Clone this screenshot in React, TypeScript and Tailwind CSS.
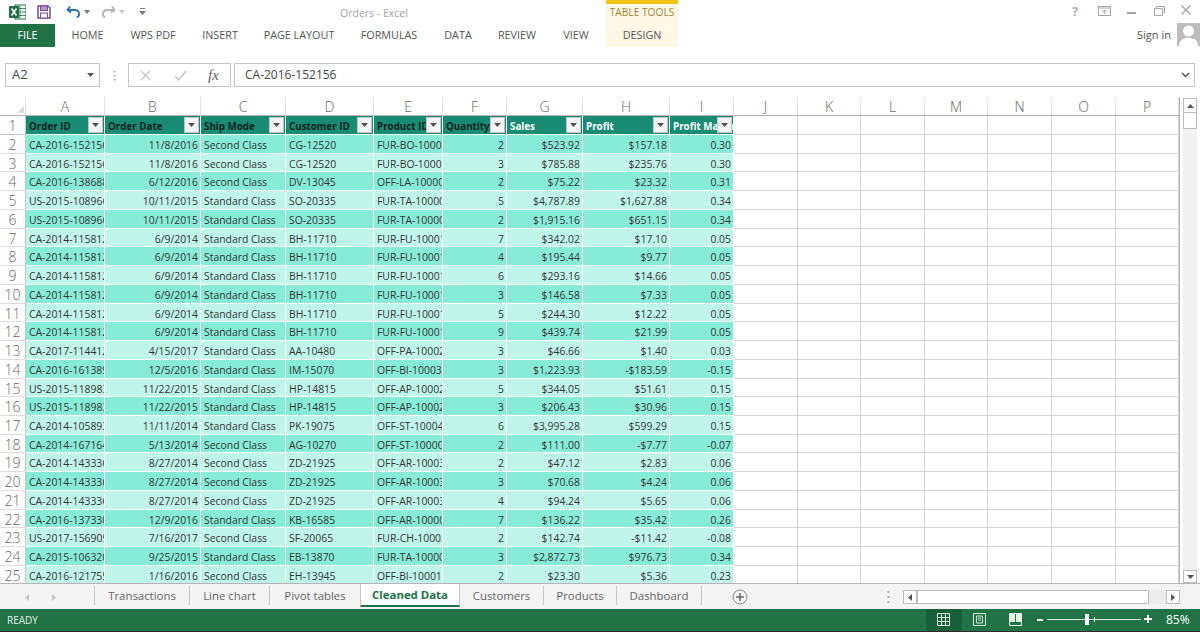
import React from "react";

const COLS = [79, 96, 85, 88, 69, 64, 76, 87, 64];
const EMPTY = [64, 63, 64, 63, 64, 64, 63];
const LETTERS = "ABCDEFGHIJKLMNOP".split("");
const HEAD = ["Order ID", "Order Date", "Ship Mode", "Customer ID", "Product ID", "Quantity", "Sales", "Profit", "Profit Margin"];

const c15 = ["CA-2014-115812", "6/9/2014", "Standard Class", "BH-11710", "FUR-FU-10001487"];
const c19 = ["CA-2014-143336", "8/27/2014", "Second Class", "ZD-21925", "OFF-AR-10003056"];
const ROWS: string[][] = [
  ["CA-2016-152156", "11/8/2016", "Second Class", "CG-12520", "FUR-BO-10001798", "2", "$523.92", "$157.18", "0.30"],
  ["CA-2016-152156", "11/8/2016", "Second Class", "CG-12520", "FUR-BO-10001798", "3", "$785.88", "$235.76", "0.30"],
  ["CA-2016-138688", "6/12/2016", "Second Class", "DV-13045", "OFF-LA-10000240", "2", "$75.22", "$23.32", "0.31"],
  ["US-2015-108966", "10/11/2015", "Standard Class", "SO-20335", "FUR-TA-10000577", "5", "$4,787.89", "$1,627.88", "0.34"],
  ["US-2015-108966", "10/11/2015", "Standard Class", "SO-20335", "FUR-TA-10000577", "2", "$1,915.16", "$651.15", "0.34"],
  [...c15, "7", "$342.02", "$17.10", "0.05"],
  [...c15, "4", "$195.44", "$9.77", "0.05"],
  [...c15, "6", "$293.16", "$14.66", "0.05"],
  [...c15, "3", "$146.58", "$7.33", "0.05"],
  [...c15, "5", "$244.30", "$12.22", "0.05"],
  [...c15, "9", "$439.74", "$21.99", "0.05"],
  ["CA-2017-114412", "4/15/2017", "Standard Class", "AA-10480", "OFF-PA-10002365", "3", "$46.66", "$1.40", "0.03"],
  ["CA-2016-161389", "12/5/2016", "Standard Class", "IM-15070", "OFF-BI-10003656", "3", "$1,223.93", "-$183.59", "-0.15"],
  ["US-2015-118983", "11/22/2015", "Standard Class", "HP-14815", "OFF-AP-10002892", "5", "$344.05", "$51.61", "0.15"],
  ["US-2015-118983", "11/22/2015", "Standard Class", "HP-14815", "OFF-AP-10002892", "3", "$206.43", "$30.96", "0.15"],
  ["CA-2014-105893", "11/11/2014", "Standard Class", "PK-19075", "OFF-ST-10004186", "6", "$3,995.28", "$599.29", "0.15"],
  ["CA-2014-167164", "5/13/2014", "Second Class", "AG-10270", "OFF-ST-10000107", "2", "$111.00", "-$7.77", "-0.07"],
  [...c19, "2", "$47.12", "$2.83", "0.06"],
  [...c19, "3", "$70.68", "$4.24", "0.06"],
  [...c19, "4", "$94.24", "$5.65", "0.06"],
  ["CA-2016-137330", "12/9/2016", "Standard Class", "KB-16585", "OFF-AR-10000246", "7", "$136.22", "$35.42", "0.26"],
  ["US-2017-156909", "7/16/2017", "Second Class", "SF-20065", "FUR-CH-10002774", "2", "$142.74", "-$11.42", "-0.08"],
  ["CA-2015-106320", "9/25/2015", "Standard Class", "EB-13870", "FUR-TA-10000577", "3", "$2,872.73", "$976.73", "0.34"],
  ["CA-2016-121755", "1/16/2016", "Second Class", "EH-13945", "OFF-BI-10001634", "2", "$23.30", "$5.36", "0.23"],
];
const RIGHT = [1, 5, 6, 7, 8];

const TABS = [
  ["HOME", "w-[65px]"],
  ["WPS PDF", "w-[66px]"],
  ["INSERT", "w-[68px]"],
  ["PAGE LAYOUT", "w-[90px]"],
  ["FORMULAS", "w-[90px]"],
  ["DATA", "w-[48px]"],
  ["REVIEW", "w-[70px]"],
  ["VIEW", "w-[48px]"],
];

function Arrow() {
  return <svg width="7" height="4" viewBox="0 0 7 4"><path d="M0 0h7L3.500 4z" fill="#555" /></svg>;
}

function FilterBtn() {
  return (
    <span className="absolute right-[1px] top-[1px] w-[15px] h-[16px] bg-[#f4f4f4] border border-[#c4c4c4] flex items-center justify-center">
      <Arrow />
    </span>
  );
}

function Sep() {
  return <span className="w-px h-[19px] bg-[#c6c6c6]" />;
}

export default function App() {
  return (
    <div className="w-[1200px] h-[632px] overflow-hidden bg-white flex flex-col text-[#444] font-['Open_Sans','Noto_Sans',sans-serif]">
      {/* Title bar */}
      <div className="h-[23px] flex items-center relative shrink-0">
        <svg className="ml-[9px]" width="17" height="16" viewBox="0 0 17 16">
          <rect x="6" y="1" width="11" height="14" fill="#fff" stroke="#1e7145" />
          <path d="M11 1v14M6 4.500h11M6 8h11M6 11.500h11" stroke="#1e7145" strokeWidth="0.8" />
          <rect x="0" y="2" width="10" height="12" fill="#1e7145" />
          <path d="M2.500 4.500l5 7M7.500 4.500l-5 7" stroke="#fff" strokeWidth="1.500" />
        </svg>
        <svg className="ml-[11px]" width="14" height="14" viewBox="0 0 14 14">
          <path d="M1 1h10l2 2v10H1z" fill="none" stroke="#7a4b9c" strokeWidth="1.500" />
          <rect x="3.500" y="1" width="7" height="4.500" fill="#b39cc8" stroke="#7a4b9c" />
          <rect x="3.500" y="8" width="7" height="5" fill="#fff" stroke="#7a4b9c" />
        </svg>
        <svg className="ml-[15px]" width="15" height="14" viewBox="0 0 15 14">
          <path d="M4 1.500L1.500 5 5 7.500" fill="none" stroke="#2f6fb5" strokeWidth="1.800" />
          <path d="M2 5h7a4 4 0 0 1 2 7.500" fill="none" stroke="#2f6fb5" strokeWidth="1.800" />
        </svg>
        <svg className="ml-[3px]" width="6" height="4" viewBox="0 0 6 4"><path d="M0 0h6L3 4z" fill="#777" /></svg>
        <svg className="ml-[11px]" width="15" height="14" viewBox="0 0 15 14">
          <path d="M11 1.500L13.500 5 10 7.500" fill="none" stroke="#b5b5b5" strokeWidth="1.800" />
          <path d="M13 5H6a4 4 0 0 0-2 7.500" fill="none" stroke="#b5b5b5" strokeWidth="1.800" />
        </svg>
        <svg className="ml-[3px]" width="6" height="4" viewBox="0 0 6 4"><path d="M0 0h6L3 4z" fill="#c4c4c4" /></svg>
        <svg className="ml-[14px]" width="7" height="7" viewBox="0 0 7 7"><path d="M1 0h5v1H1zM0 3h7L3.500 7z" fill="#777" /></svg>
        <span className="absolute left-[340px] top-[4px] text-[10.500px] leading-[18px] text-[#a4a4a4] whitespace-nowrap">Orders - Excel</span>
        <div className="absolute left-[606px] top-0 w-[72px] h-[23px] bg-[#fff8e7] border-t-4 border-[#f2c314] text-center text-[10.200px] leading-[17px] text-[#a18438] whitespace-nowrap">TABLE TOOLS</div>
        <span className="absolute left-[1072px] top-[2px] text-[13px] leading-[18px] font-bold text-[#b0b0b0]">?</span>
        <svg className="absolute left-[1098px] top-[6px]" width="13" height="10" viewBox="0 0 13 10">
          <rect x="0.500" y="0.500" width="12" height="9" fill="none" stroke="#a8a8a8" />
          <path d="M0.500 2h12M6.500 8V4M4.500 6l2-2 2 2" stroke="#a8a8a8" fill="none" />
        </svg>
        <span className="absolute left-[1127px] top-[12px] w-[9px] h-[2px] bg-[#a8a8a8]" />
        <svg className="absolute left-[1154px] top-[6px]" width="11" height="10" viewBox="0 0 11 10">
          <path d="M2.500 2.500V.5h8v6h-2M.5 2.500h8v7h-8z" fill="#fff" stroke="#a8a8a8" />
        </svg>
        <svg className="absolute left-[1181px] top-[5px]" width="10" height="10" viewBox="0 0 10 10">
          <path d="M.5.500l9 9M9.500.5l-9 9" stroke="#a8a8a8" strokeWidth="1.500" />
        </svg>
      </div>

      {/* Ribbon tabs */}
      <div className="h-[24px] flex items-center relative shrink-0 text-[10.800px]">
        <div className="w-[55px] h-[23px] bg-[#217346] text-white flex items-center justify-center pt-[1px]">FILE</div>
        {TABS.map(([t, w]) => (
          <div key={t} className={`${w} flex justify-center whitespace-nowrap text-[#555] pt-[1px]`}>{t}</div>
        ))}
        <div className="ml-[6px] w-[72px] h-[24px] bg-[#fff8e7] flex items-center justify-center text-[#555] pt-[1px]">DESIGN</div>
        <span className="absolute left-[1137px] top-[3px] text-[11px] leading-[18px] text-[#555] whitespace-nowrap">Sign in</span>
        <div className="absolute left-[1177px] top-0 w-[23px] h-[23px] bg-[#bdbdbd] overflow-hidden">
          <svg width="23" height="23" viewBox="0 0 23 23">
            <circle cx="11.500" cy="8" r="5.500" fill="#fff" />
            <path d="M2 23c0-6 4-8 9.500-8s9.500 2 9.500 8z" fill="#fff" />
          </svg>
        </div>
      </div>

      <div className="h-[16px] shrink-0" />

      {/* Formula bar */}
      <div className="h-[24px] shrink-0 flex items-stretch text-[12px] text-[#444]">
        <div className="ml-[5px] w-[95px] border border-[#c6c6c6] flex items-center justify-between pl-[6px] pr-[5px] text-[13px]">
          <span>A2</span>
          <Arrow />
        </div>
        <div className="w-[28px] flex items-center justify-center">
          <svg width="3" height="11" viewBox="0 0 3 11"><path d="M0.500 1h2v1.500h-2zM0.500 5h2v1.500h-2zM0.500 9h2v1.500h-2z" fill="#aaa" /></svg>
        </div>
        <div className="w-[103px] border border-[#c6c6c6] flex items-center pl-[11px]">
          <svg width="11" height="11" viewBox="0 0 11 11"><path d="M1 1l9 9M10 1l-9 9" stroke="#c4c4c4" strokeWidth="1.300" /></svg>
          <svg className="ml-[23px]" width="13" height="11" viewBox="0 0 13 11"><path d="M1 6l3.500 4L12 1" fill="none" stroke="#c4c4c4" strokeWidth="1.500" /></svg>
          <span className="ml-[21px] font-['Liberation_Serif',serif] italic text-[15px] text-[#666] leading-none">fx</span>
        </div>
        <div className="ml-[3px] w-[961px] border border-[#c6c6c6] flex items-center justify-between pl-[10px] pr-[4px]">
          <span>CA-2016-152156</span>
          <svg width="9" height="6" viewBox="0 0 9 6"><path d="M1 1l3.500 3.500L8 1" fill="none" stroke="#555" strokeWidth="1.500" /></svg>
        </div>
      </div>

      <div className="h-[10px] shrink-0" />

      {/* Sheet */}
      <div className="h-[486px] shrink-0 flex relative">
        <div className="w-[1180px] flex flex-col border-r border-[#b5b5b5]">
          <div className="h-[19px] flex shrink-0 border-b border-[#b5b5b5]">
            <div className="w-[26px] shrink-0 relative border-r border-[#e2e2e2]">
              <span className="absolute right-[1px] bottom-[2px] w-0 h-0 border-l-[7px] border-l-transparent border-b-[7px] border-b-[#dcdcdc]" />
            </div>
            {[...COLS, ...EMPTY].map((w, i) => (
              <div key={i} style={{ width: w }} className="shrink-0 border-r border-[#e2e2e2] text-center text-[14px] leading-[19px] font-light text-[#666]">{LETTERS[i]}</div>
            ))}
          </div>
          {/* Header row */}
          <div className="h-[19px] flex shrink-0">
            <div className="w-[26px] shrink-0 border-r border-b border-[#c6c6c6] text-center text-[14px] leading-[20px] font-light text-[#666]">1</div>
            {COLS.map((w, i) => (
              <div key={i} style={{ width: w }} className={`shrink-0 relative border-r border-b border-white bg-[#178c72] bg-clip-padding text-[9.800px] font-bold leading-[22px] pl-[3px] whitespace-nowrap overflow-hidden ${i >= 6 ? "text-white" : "text-[#10251f]"}`}>
                {HEAD[i]}
                <FilterBtn />
              </div>
            ))}
            {EMPTY.map((w, i) => (
              <div key={i} style={{ width: w }} className="shrink-0 border-r border-b border-[#d4d4d4]" />
            ))}
          </div>
          {ROWS.map((r, ri) => (
            <div key={ri} className="h-[18.740px] flex shrink-0">
              <div className="w-[26px] shrink-0 border-r border-b border-[#c6c6c6] border-b-[#dcdcdc] text-center text-[14px] leading-[19px] font-light text-[#666]">{ri + 2}</div>
              {r.map((v, i) => (
                <div key={i} style={{ width: COLS[i] }} className={`shrink-0 border-r border-b border-white bg-clip-padding text-[10.400px] leading-[20px] whitespace-nowrap overflow-hidden text-[#333] ${ri % 2 === 0 ? "bg-[#87ecd7]" : "bg-[#c0f6ea]"} ${RIGHT.includes(i) ? "text-right pr-[2px]" : "pl-[3px]"}`}>{v}</div>
              ))}
              {EMPTY.map((w, i) => (
                <div key={i} style={{ width: w }} className="shrink-0 border-r border-b border-[#d4d4d4]" />
              ))}
            </div>
          ))}
        </div>
        {/* Vertical scrollbar */}
        <div className="w-[20px] bg-white flex pt-[1px]">
          <div className="ml-[3px] w-[14px] bg-[#f0f0f0] flex flex-col">
            <div className="h-[15px] border border-[#bcbcbc] bg-white flex items-center justify-center">
              <svg width="7" height="4" viewBox="0 0 7 4"><path d="M3.500 0L7 4H0z" fill="#555" /></svg>
            </div>
            <div className="h-[16px] border border-t-0 border-[#bcbcbc] bg-white" />
            <div className="flex-1" />
            <div className="h-[13px] border border-[#bcbcbc] bg-white flex items-center justify-center">
              <Arrow />
            </div>
          </div>
        </div>
      </div>

      {/* Sheet tabs */}
      <div className="h-[26px] shrink-0 flex items-start bg-[#f3f3f3] border-t border-[#b5b5b5] relative text-[11.400px] text-[#666]">
        <svg className="absolute left-[25px] top-[10px]" width="4" height="7" viewBox="0 0 4 7"><path d="M4 0v7L0 3.500z" fill="#c4c4c4" /></svg>
        <svg className="absolute left-[52px] top-[10px]" width="4" height="7" viewBox="0 0 4 7"><path d="M0 0v7l4-3.500z" fill="#c4c4c4" /></svg>
        <div className="ml-[94px] flex items-center h-[23px]">
          <Sep />
          <span className="w-[94px] text-center pt-[1px]">Transactions</span>
          <Sep />
          <span className="w-[79px] text-center pt-[1px]">Line chart</span>
          <Sep />
          <span className="w-[90px] text-center pt-[1px]">Pivot tables</span>
          <div className="w-[100px] h-[23px] bg-white border-b-2 border-l border-r border-[#217346] border-l-[#c6c6c6] border-r-[#c6c6c6] text-center font-bold text-[#217346] leading-[22px]">Cleaned Data</div>
          <span className="w-[83px] text-center pt-[1px]">Customers</span>
          <Sep />
          <span className="w-[72px] text-center pt-[1px]">Products</span>
          <Sep />
          <span className="w-[84px] text-center pt-[1px]">Dashboard</span>
          <Sep />
        </div>
        <svg className="absolute left-[732px] top-[5px]" width="16" height="16" viewBox="0 0 16 16">
          <circle cx="8" cy="8" r="7" fill="none" stroke="#888" />
          <path d="M8 4v8M4 8h8" stroke="#666" strokeWidth="1.500" />
        </svg>
        <svg className="absolute left-[887px] top-[6px]" width="3" height="13" viewBox="0 0 3 13"><path d="M0.500 1h2v2h-2zM0.500 6h2v2h-2zM0.500 11h2v2h-2z" fill="#b0b0b0" /></svg>
        <div className="absolute left-[903px] top-[6px] w-[277px] h-[14px] flex">
          <div className="w-[14px] border border-[#bcbcbc] bg-white flex items-center justify-center">
            <svg width="4" height="7" viewBox="0 0 4 7"><path d="M4 0v7L0 3.500z" fill="#555" /></svg>
          </div>
          <div className="w-[232px] border border-[#bcbcbc] bg-white" />
          <div className="flex-1 bg-[#ececec]" />
          <div className="w-[14px] border border-[#bcbcbc] bg-white flex items-center justify-center">
            <svg width="4" height="7" viewBox="0 0 4 7"><path d="M0 0v7l4-3.500z" fill="#555" /></svg>
          </div>
        </div>
      </div>

      {/* Status bar */}
      <div className="flex-1 bg-[#217346] border-b border-[#2b2b2b] flex items-stretch relative text-white text-[10px]">
        <span className="ml-[7px] self-center text-[#e6f2ea]">READY</span>
        <div className="absolute left-[926px] top-0 bottom-0 w-[36px] bg-[#19613a]" />
        <svg className="absolute left-[937px] top-[4px]" width="13" height="13" viewBox="0 0 13 13">
          <path d="M.5.500h12v12H.5zM4.500.5v12M8.500.5v12M.5 4.500h12M.5 8.500h12" fill="none" stroke="#dff0e6" />
        </svg>
        <svg className="absolute left-[973px] top-[4px]" width="13" height="13" viewBox="0 0 13 13">
          <path d="M.5.500h12v12H.5z" fill="none" stroke="#cfe6d8" />
          <path d="M3.500 3h6v7h-6zM5 5h3M5 7h3" fill="none" stroke="#cfe6d8" />
        </svg>
        <svg className="absolute left-[1009px] top-[4px]" width="13" height="13" viewBox="0 0 13 13">
          <path d="M.5.500h12v12H.5z" fill="none" stroke="#e6f2ea" />
          <path d="M1 1h5v8H1zM7 1h5v8H7z" fill="#e6f2ea" />
        </svg>
        <span className="absolute left-[1037px] top-[10px] w-[6px] h-[2px] bg-white" />
        <span className="absolute left-[1047px] top-[10px] w-[94px] h-px bg-[#dcebe2]" />
        <span className="absolute left-[1094px] top-[8px] w-px h-[5px] bg-[#dcebe2]" />
        <span className="absolute left-[1085px] top-[5px] w-[4px] h-[11px] bg-white" />
        <svg className="absolute left-[1144px] top-[6px]" width="8" height="8" viewBox="0 0 8 8"><path d="M4 0v8M0 4h8" stroke="#fff" strokeWidth="2" /></svg>
        <span className="absolute left-[1166px] top-[3px] leading-[16px] text-[12px]">85%</span>
      </div>
    </div>
  );
}
